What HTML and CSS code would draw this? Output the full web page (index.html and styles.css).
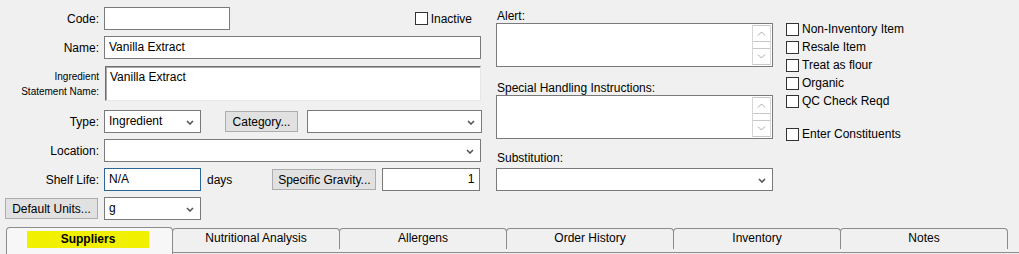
FILE: index.html
```html
<!DOCTYPE html>
<html lang="en">
<head>
    <meta charset="UTF-8">
    <title>Ingredient</title>
    <link rel="stylesheet" href="styles.css">
</head>
<body>

<div class="form">
    <div class="left">
        <div class="row">
            <span class="lbl">Code:</span>
            <div class="box code"></div>
            <label class="check inactive"><span class="cb"></span>Inactive</label>
        </div>
        <div class="row">
            <span class="lbl">Name:</span>
            <div class="box wide">Vanilla Extract</div>
        </div>
        <div class="row isn-row">
            <span class="lbl small">Ingredient<br>Statement Name:</span>
            <div class="inset">Vanilla Extract</div>
        </div>
        <div class="row">
            <span class="lbl">Type:</span>
            <div class="box select short">Ingredient<svg class="chev" width="8" height="5" viewBox="0 0 8 5"><path d="M1 1 L4 4 L7 1" fill="none" stroke="#555" stroke-width="1.6"/></svg></div>
            <button class="btn cat-btn">Category...</button>
            <div class="box select cat"><svg class="chev" width="8" height="5" viewBox="0 0 8 5"><path d="M1 1 L4 4 L7 1" fill="none" stroke="#555" stroke-width="1.6"/></svg></div>
        </div>
        <div class="row">
            <span class="lbl">Location:</span>
            <div class="box select wide"><svg class="chev" width="8" height="5" viewBox="0 0 8 5"><path d="M1 1 L4 4 L7 1" fill="none" stroke="#555" stroke-width="1.6"/></svg></div>
        </div>
        <div class="row">
            <span class="lbl">Shelf Life:</span>
            <div class="box short focus">N/A</div>
            <span class="days">days</span>
            <button class="btn sg-btn">Specific Gravity...</button>
            <div class="box num">1</div>
        </div>
        <div class="row">
            <button class="btn units-btn">Default Units...</button>
            <div class="box select short">g<svg class="chev" width="8" height="5" viewBox="0 0 8 5"><path d="M1 1 L4 4 L7 1" fill="none" stroke="#555" stroke-width="1.6"/></svg></div>
        </div>
    </div>

    <div class="middle">
        <div class="cap first">Alert:</div>
        <div class="memo">
            <div class="scroll">
                <span class="sbtn"><svg width="9" height="5" viewBox="0 0 9 5"><path d="M1 4.5 L4.5 1 L8 4.5" fill="none" stroke="#a8a8a8"/></svg></span>
                <span class="sbtn"><svg width="9" height="5" viewBox="0 0 9 5"><path d="M1 0.5 L4.5 4 L8 0.5" fill="none" stroke="#a8a8a8"/></svg></span>
            </div>
        </div>
        <div class="cap">Special Handling Instructions:</div>
        <div class="memo">
            <div class="scroll">
                <span class="sbtn"><svg width="9" height="5" viewBox="0 0 9 5"><path d="M1 4.5 L4.5 1 L8 4.5" fill="none" stroke="#a8a8a8"/></svg></span>
                <span class="sbtn"><svg width="9" height="5" viewBox="0 0 9 5"><path d="M1 0.5 L4.5 4 L8 0.5" fill="none" stroke="#a8a8a8"/></svg></span>
            </div>
        </div>
        <div class="cap sub">Substitution:</div>
        <div class="box select full"><svg class="chev" width="8" height="5" viewBox="0 0 8 5"><path d="M1 1 L4 4 L7 1" fill="none" stroke="#555" stroke-width="1.6"/></svg></div>
    </div>

    <div class="flags">
        <label class="check"><span class="cb"></span>Non-Inventory Item</label>
        <label class="check"><span class="cb"></span>Resale Item</label>
        <label class="check"><span class="cb"></span>Treat as flour</label>
        <label class="check"><span class="cb"></span>Organic</label>
        <label class="check"><span class="cb"></span>QC Check Reqd</label>
        <label class="check gap"><span class="cb"></span>Enter Constituents</label>
    </div>
</div>

<div class="tabs">
    <div class="tab active"><span class="hl">Suppliers</span></div>
    <div class="tab">Nutritional Analysis</div>
    <div class="tab">Allergens</div>
    <div class="tab">Order History</div>
    <div class="tab">Inventory</div>
    <div class="tab">Notes</div>
</div>
<div class="pane"></div>

</body>
</html>
```

FILE: styles.css
```css
body { margin: 0; background-color: #f0f0f0; font-family: "Liberation Sans", Arial, sans-serif; font-size: 12px; color: #000; overflow: hidden; height: 254px; }
.form { display: flex; height: 227px; }

.left { width: 481px; padding-top: 7px; display: flex; flex-direction: column; gap: 6px; }
.row { display: flex; align-items: center; height: 23px; }
.lbl { width: 99px; margin-right: 5px; text-align: right; flex-shrink: 0; }
.lbl.small { font-size: 10px; line-height: 15px; }
.isn-row { height: 35px; margin-top: 1px; margin-bottom: 3px; }

.box { box-sizing: border-box; height: 23px; background: #fff; border: 1px solid #7a7a7a; padding: 0 4px; line-height: 21px; position: relative; white-space: nowrap; flex-shrink: 0; }
.box.code { width: 126px; }
.box.wide { width: 377px; }
.box.short { width: 97px; }
.box.cat { width: 175px; margin-left: 9px; }
.box.full { width: 277px; }
.box.focus { border-color: #2f6596; }
.box.num { width: 98px; margin-left: 6px; text-align: right; padding-right: 5px; }
.select .chev { position: absolute; right: 6px; top: 9px; }

.inset { box-sizing: border-box; width: 376px; height: 35px; margin-left: 1px; background: #fff; border: 1px solid; border-color: #6e6e6e #e6e6e6 #e6e6e6 #6e6e6e; box-shadow: inset 1px 1px 0 #a8a8a8; padding: 3px 4px; line-height: 14px; }

.btn { box-sizing: border-box; height: 21px; padding: 0; background: #e1e1e1; border: 1px solid #adadad; font-family: inherit; font-size: 12px; color: #000; white-space: nowrap; flex-shrink: 0; }
.cat-btn { width: 73px; margin-left: 24px; }
.sg-btn { width: 104px; margin-left: 40px; }
.units-btn { width: 93px; margin-left: 5px; margin-right: 6px; }
.days { margin-left: 6px; }

.check { display: flex; align-items: center; height: 18px; }
.cb { box-sizing: border-box; width: 13px; height: 13px; border: 1px solid #333; background: #fff; margin-right: 3px; }
.inactive { margin-left: auto; margin-right: 9px; }

.middle { width: 277px; margin-left: 15px; padding-top: 9px; }
.cap { line-height: 14px; margin-top: 14px; padding-left: 1px; }
.cap.first { margin-top: 0; }
.cap.sub { margin-top: 12px; margin-bottom: 3px; }
.memo { box-sizing: border-box; height: 44px; background: #fff; border: 1px solid #7a7a7a; display: flex; justify-content: flex-end; padding: 1px; }
.scroll { width: 17px; display: flex; flex-direction: column; justify-content: space-between; border-left: 1px solid #d6d6d6; border-right: 1px solid #d6d6d6; }
.sbtn { height: 17px; border-top: 1px solid #c8c8c8; border-bottom: 1px solid #c8c8c8; display: flex; align-items: center; justify-content: center; box-sizing: border-box; }

.flags { margin-left: 13px; padding-top: 20px; }
.flags .gap { margin-top: 15px; }

.tabs { display: flex; align-items: flex-start; padding-left: 6px; height: 25px; }
.tab { box-sizing: border-box; flex-shrink: 0; width: 168px; height: 21px; margin-top: 1px; border: 1px solid #8c8c8c; border-bottom: none; border-radius: 4px 4px 0 0; margin-left: -1px; text-align: center; line-height: 19px; background: #f0f0f0; }
.tab.active { width: 167px; height: 27px; margin-top: 0; margin-left: 0; position: relative; z-index: 1; background: #f7f7f7; font-weight: bold; padding-top: 3px; line-height: 17px; }
.hl { display: block; width: 122px; height: 17px; margin-left: 20px; background: #f0f000; }
.pane { margin-left: 12px; border-top: 1px solid #8c8c8c; }
```
